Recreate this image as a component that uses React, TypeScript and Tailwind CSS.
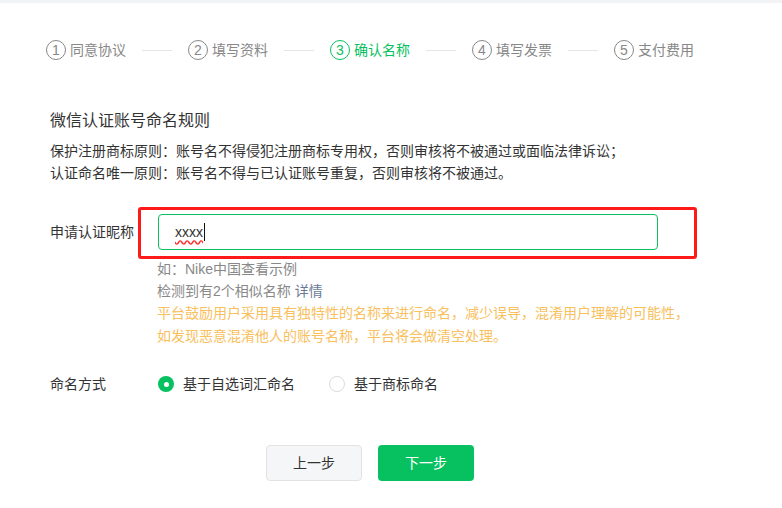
const font = { fontFamily: '"Liberation Sans", "Noto Sans CJK SC", sans-serif' };

const steps = ['同意协议', '填写资料', '确认名称', '填写发票', '支付费用'];
const active = 2;

const Steps = () => (
  <div className="flex items-center pl-[46px] mt-[37px] h-[20px]">
    {steps.map((s, i) => (
      <div key={s} className="flex items-center">
        <span
          className={
            i === active
              ? 'w-[20px] h-[20px] rounded-full border border-[#07c160] text-[#07c160] flex items-center justify-center text-[14px] leading-none'
              : 'w-[20px] h-[20px] rounded-full border border-[#888] text-[#888] flex items-center justify-center text-[14px] leading-none'
          }
        >
          {i + 1}
        </span>
        <span
          className={
            i === active
              ? 'ml-[4px] w-[56px] text-[14px] leading-[20px] text-[#07c160]'
              : 'ml-[4px] w-[56px] text-[14px] leading-[20px] text-[#888]'
          }
        >
          {s}
        </span>
        {i < steps.length - 1 && <span className="mx-[16px] w-[30px] h-px bg-[#e5e5e5]" />}
      </div>
    ))}
  </div>
);

const Radio = ({ checked, label }: { checked: boolean; label: string }) => (
  <label className="flex items-center">
    {checked ? (
      <span className="w-[16px] h-[16px] rounded-full bg-[#07c160] flex items-center justify-center">
        <span className="w-[5px] h-[5px] rounded-full bg-white" />
      </span>
    ) : (
      <span className="w-[16px] h-[16px] rounded-full border border-[#dcdcdc] bg-white" />
    )}
    <span className="ml-[9px] text-[14px] leading-[22px] text-[#333]">{label}</span>
  </label>
);

export default function App() {
  return (
    <div className="w-full min-h-screen bg-white border-t-[3px] border-[#f2f3f5]" style={font}>
      <Steps />

      <div className="pl-[50px]">
        <h2 className="mt-[49px] text-[16px] leading-[24px] text-[#333]">微信认证账号命名规则</h2>
        <div className="mt-[7px] text-[14px] leading-[22px] text-[#333]">
          <p>保护注册商标原则：账号名不得侵犯注册商标专用权，否则审核将不被通过或面临法律诉讼；</p>
          <p>认证命名唯一原则：账号名不得与已认证账号重复，否则审核将不被通过。</p>
        </div>

        {/* nickname row */}
        <div className="relative mt-[30px] flex items-center">
          <span className="w-[108px] text-[14px] leading-[22px] text-[#333]">申请认证昵称</span>
          <div className="w-[500px] h-[36px] rounded-[4px] border border-[#07c160] flex items-center pl-[16px] text-[14px] text-[#333]">
            <span className="underline decoration-wavy decoration-[#ff2a2a] underline-offset-[3px]">xxxx</span>
            <span className="ml-px w-px h-[18px] bg-[#111]" />
          </div>
          {/* annotation box */}
          <div className="absolute left-[88px] top-[-7px] w-[559px] h-[52px] border-[3px] border-[#ff1a1a] rounded-[3px] pointer-events-none" />
        </div>

        <div className="mt-[8px] pl-[107px] text-[14px]">
          <p className="leading-[22px] text-[#888]">如：Nike中国查看示例</p>
          <p className="leading-[22px] text-[#888]">
            检测到有2个相似名称 <span className="text-[#6b7a99]">详情</span>
          </p>
          <p className="leading-[23px] text-[#f8c05e]">平台鼓励用户采用具有独特性的名称来进行命名，减少误导，混淆用户理解的可能性，</p>
          <p className="leading-[23px] text-[#f8c05e]">如发现恶意混淆他人的账号名称，平台将会做清空处理。</p>
        </div>

        <div className="mt-[25px] flex items-center">
          <span className="w-[108px] text-[14px] leading-[22px] text-[#333]">命名方式</span>
          <Radio checked label="基于自选词汇命名" />
          <div className="ml-[34px]">
            <Radio checked={false} label="基于商标命名" />
          </div>
        </div>

        <div className="mt-[50px] ml-[216px] flex gap-[16px]">
          <button className="w-[96px] h-[36px] rounded-[4px] border border-[#e2e2e2] bg-[#f5f6f7] text-[14px] text-[#333]">
            上一步
          </button>
          <button className="w-[96px] h-[36px] rounded-[4px] bg-[#07c160] text-[14px] text-white">下一步</button>
        </div>
      </div>
    </div>
  );
}
